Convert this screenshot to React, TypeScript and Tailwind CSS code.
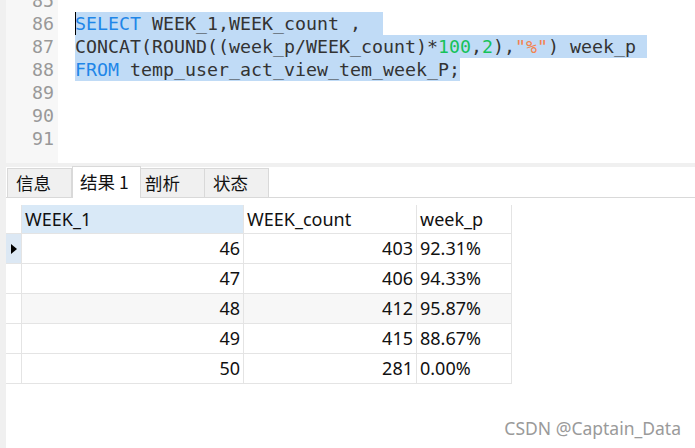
const lines: { n: number; code: React.ReactNode }[] = [
  { n: 85, code: null },
  {
    n: 86,
    code: (
      <>
        <span className="text-[#1f86e8]">SELECT</span> WEEK_1,WEEK_count ,{'  '}
      </>
    ),
  },
  {
    n: 87,
    code: (
      <>
        CONCAT(ROUND((week_p/WEEK_count)*<span className="text-[#16c25a]">100</span>,
        <span className="text-[#16c25a]">2</span>),<span className="text-[#f5824d]">"%"</span>) week_p{' '}
      </>
    ),
  },
  {
    n: 88,
    code: (
      <>
        <span className="text-[#1f86e8]">FROM</span> temp_user_act_view_tem_week_P;
      </>
    ),
  },
  { n: 89, code: null },
  { n: 90, code: null },
  { n: 91, code: null },
]

const rows = [
  { w: 46, c: 403, p: '92.31%' },
  { w: 47, c: 406, p: '94.33%' },
  { w: 48, c: 412, p: '95.87%' },
  { w: 49, c: 415, p: '88.67%' },
  { w: 50, c: 281, p: '0.00%' },
]

const tabs = ['信息', '结果 1', '剖析', '状态']

export default function App() {
  return (
    <div className="relative flex h-[448px] w-[695px] overflow-hidden bg-white">
      <div className="w-[6px] shrink-0 bg-[#f0f0f0]" />
      <div className="flex flex-1 flex-col">
        {/* editor */}
        <div className="flex h-[163px] overflow-hidden font-['DejaVu_Sans_Mono',monospace] text-[18.27px]">
          <div className="w-[52px] shrink-0 bg-[#f7f7f7] pr-[4px] text-right text-[#999]">
            <div className="-mt-[11px]">
              {lines.map((l) => (
                <div key={l.n} className="h-[23px] leading-[23px]">
                  {l.n}
                </div>
              ))}
            </div>
          </div>
          <div className="flex-1 pl-[17px] text-[#333]">
            <div className="-mt-[11px]">
              {lines.map((l) => (
                <div key={l.n} className="relative h-[23px] whitespace-pre leading-[23px]">
                  {l.code && <span className="inline-block h-[23px] bg-[#c0dbf6] leading-[23px]">{l.code}</span>}
                  {l.n === 86 && <span className="absolute left-0 top-0 h-[23px] w-px bg-black" />}
                </div>
              ))}
            </div>
          </div>
        </div>
        <div className="h-[4px] bg-[#f0f0f0]" />

        {/* tabs */}
        <div className="flex h-[31px] items-end border-b border-[#d9d9d9] font-['Noto_Sans_CJK_SC',sans-serif] text-[17.5px] text-[#111]">
          <div className="w-px" />
          {tabs.map((t, i) =>
            i === 1 ? (
              <div
                key={t}
                className="-mb-px flex h-[32px] w-[69px] items-center border-x border-t border-[#d9d9d9] bg-white pl-[7px]"
              >
                {t}
              </div>
            ) : (
              <div
                key={t}
                className={`flex h-[29px] items-center border-t border-r border-[#d9d9d9] bg-[#f0f0f0] ${
                  i === 0 ? 'w-[65px] border-l pl-[8px]' : i === 2 ? 'w-[64px] pl-[4px]' : 'w-[64px] pl-[8px]'
                }`}
              >
                {t}
              </div>
            ),
          )}
        </div>

        {/* result grid */}
        <div className="mt-[7px] w-[506px] font-['Noto_Sans',sans-serif] text-[18px] text-[#111]">
          <div className="flex h-[29px] border-b border-[#e4e4e4]">
            <div className="w-[16px] border-r border-[#e4e4e4]" />
            <div className="flex w-[221px] items-center bg-[#d9e9f7] pl-[3px]">WEEK_1</div>
            <div className="flex w-[174px] items-center border-x border-[#e4e4e4] pl-[3px]">WEEK_count</div>
            <div className="flex w-[95px] items-center border-r border-[#e4e4e4] pl-[3px]">week_p</div>
          </div>
          {rows.map((r, i) => (
            <div key={r.w} className={`flex h-[30px] border-b border-[#e4e4e4] ${i === 2 ? 'bg-[#f7f7f7]' : ''}`}>
              <div
                className={`flex w-[16px] items-center justify-center border-r border-[#e4e4e4] ${
                  i === 0 ? 'bg-[#dce8f4]' : 'bg-white'
                }`}
              >
                {i === 0 && (
                  <svg width="6" height="10" viewBox="0 0 6 10">
                    <path d="M0 0 L6 5 L0 10 Z" fill="#000" />
                  </svg>
                )}
              </div>
              <div className="flex w-[221px] items-center justify-end pr-[3px]">{r.w}</div>
              <div className="flex w-[174px] items-center justify-end border-x border-[#e4e4e4] pr-[3px]">{r.c}</div>
              <div className="flex w-[95px] items-center border-r border-[#e4e4e4] pl-[3px]">{r.p}</div>
            </div>
          ))}
        </div>
      </div>

      <div className="absolute bottom-[7px] right-[14px] font-['Noto_Sans',sans-serif] text-[17.5px] text-[#9a9a9a]">
        CSDN @Captain_Data
      </div>
    </div>
  )
}
